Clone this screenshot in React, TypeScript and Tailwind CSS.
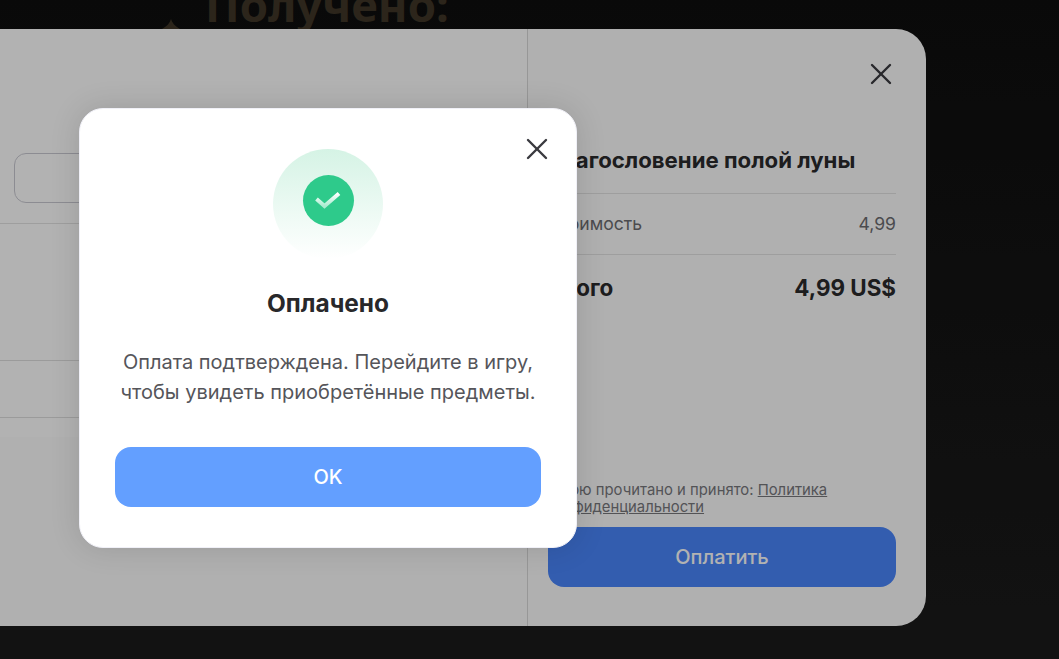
import { X } from "lucide-react";

function SuccessIcon() {
  return (
    <div className="flex h-[110px] w-[110px] items-center justify-center rounded-full bg-gradient-to-b from-[#d5f3e5] to-white pb-2">
      <div className="flex h-[51px] w-[51px] items-center justify-center rounded-full bg-[#2eca8b]">
        <svg width="26" height="18" viewBox="0 0 26 18" fill="none">
          <defs>
            <linearGradient id="tick" x1="0" y1="0" x2="0" y2="1">
              <stop offset="0" stopColor="#ffffff" />
              <stop offset="1" stopColor="#a9ecd0" />
            </linearGradient>
          </defs>
          <path d="M1.5 8 L9.5 15 L24 2.5" stroke="url(#tick)" strokeWidth="4" />
        </svg>
      </div>
    </div>
  );
}

function PaidDialog() {
  return (
    <div className="absolute left-[79px] top-[108px] flex h-[440px] w-[498px] flex-col items-center rounded-[24px] border border-[#f0f0f7] bg-white px-[35px] pt-10 shadow-[0_0_30px_rgba(0,0,0,0.13)]">
      <button type="button" className="absolute right-[21px] top-[22px] text-[#3a3a3f]">
        <X size={36} strokeWidth={1.6} />
      </button>
      <SuccessIcon />
      <h2 className="mt-[26px] text-[24.4px] font-bold leading-[36px] text-[#28282a]">Оплачено</h2>
      <p className="mt-[26px] whitespace-nowrap text-center text-[20px] leading-[30px] text-[#55555a]">
        Оплата подтверждена. Перейдите в игру,
        <br />
        чтобы увидеть приобретённые предметы.
      </p>
      <button
        type="button"
        className="mt-10 h-[60px] w-full rounded-2xl bg-[#639fff] text-[20px] font-medium text-white"
      >
        OK
      </button>
    </div>
  );
}

export default function App() {
  return (
    <div className="relative h-[659px] w-[1059px] overflow-hidden bg-gradient-to-b from-[#0e0e0e] to-[#1b1b1b] font-['Inter',sans-serif]">
      {/* page behind the checkout */}
      <div className="absolute left-[205px] top-[-21px] font-['Noto_Sans',sans-serif] text-[45.5px] font-bold leading-[50px] text-[#3f3627]">
        Получено:
      </div>
      <svg className="absolute left-[162px] top-[19px]" width="18" height="10" viewBox="0 0 18 10" fill="#3f3627">
        <path d="M9 0 C10 4 13 7 18 10 L0 10 C5 7 8 4 9 0 Z" />
      </svg>

      {/* checkout panel */}
      <div className="relative ml-[-74px] mt-[29px] flex h-[597px] w-[1000px] overflow-hidden rounded-[30px] bg-[#fdfdfd]">
        <div className="w-[602px] border-r border-[#d8d8d8]">
          <div className="bg-white pb-[19px] pt-[124px]">
            <div className="ml-[88px] h-[50px] rounded-xl border border-[#c9c9d2]" />
            <div className="mt-5 h-[137px] border-t border-[#e2e2e2]" />
            <div className="h-[58px] border-y border-[#dfdfdf]" />
          </div>
        </div>

        <div className="flex flex-1 flex-col pb-[39px] pl-5 pr-[30px]">
          <button type="button" className="mr-[-3px] self-end pt-[27px] text-[#3a3a3f]">
            <X size={36} strokeWidth={1.6} />
          </button>
          <div className="mt-[54px] whitespace-nowrap border-b border-[#e2e2e2] pb-[19px] text-[22.2px] font-bold leading-7 text-[#2a2a2c]">
            Благословение полой луны
          </div>
          <div className="flex h-[61px] items-center justify-between border-b border-[#e2e2e2] text-[17.6px] text-[#6c6c70]">
            <span>Стоимость</span>
            <span>4,99</span>
          </div>
          <div className="flex h-[65px] items-center justify-between text-[22.4px] font-bold text-[#2a2a2c]">
            <span>Итого</span>
            <span>4,99 US$</span>
          </div>
          <p className="mt-auto text-[14.85px] leading-[17px] text-[#77777c]">
            Мною прочитано и принято: <span className="underline">Политика конфиденциальности</span>
          </p>
          <button
            type="button"
            className="mt-[11px] h-[60px] rounded-2xl bg-[#4a86fb] text-[20px] font-medium text-white"
          >
            Оплатить
          </button>
        </div>
      </div>

      {/* dim layer and the confirmation on top */}
      <div className="absolute inset-0 bg-black/30" />
      <PaidDialog />
    </div>
  );
}
